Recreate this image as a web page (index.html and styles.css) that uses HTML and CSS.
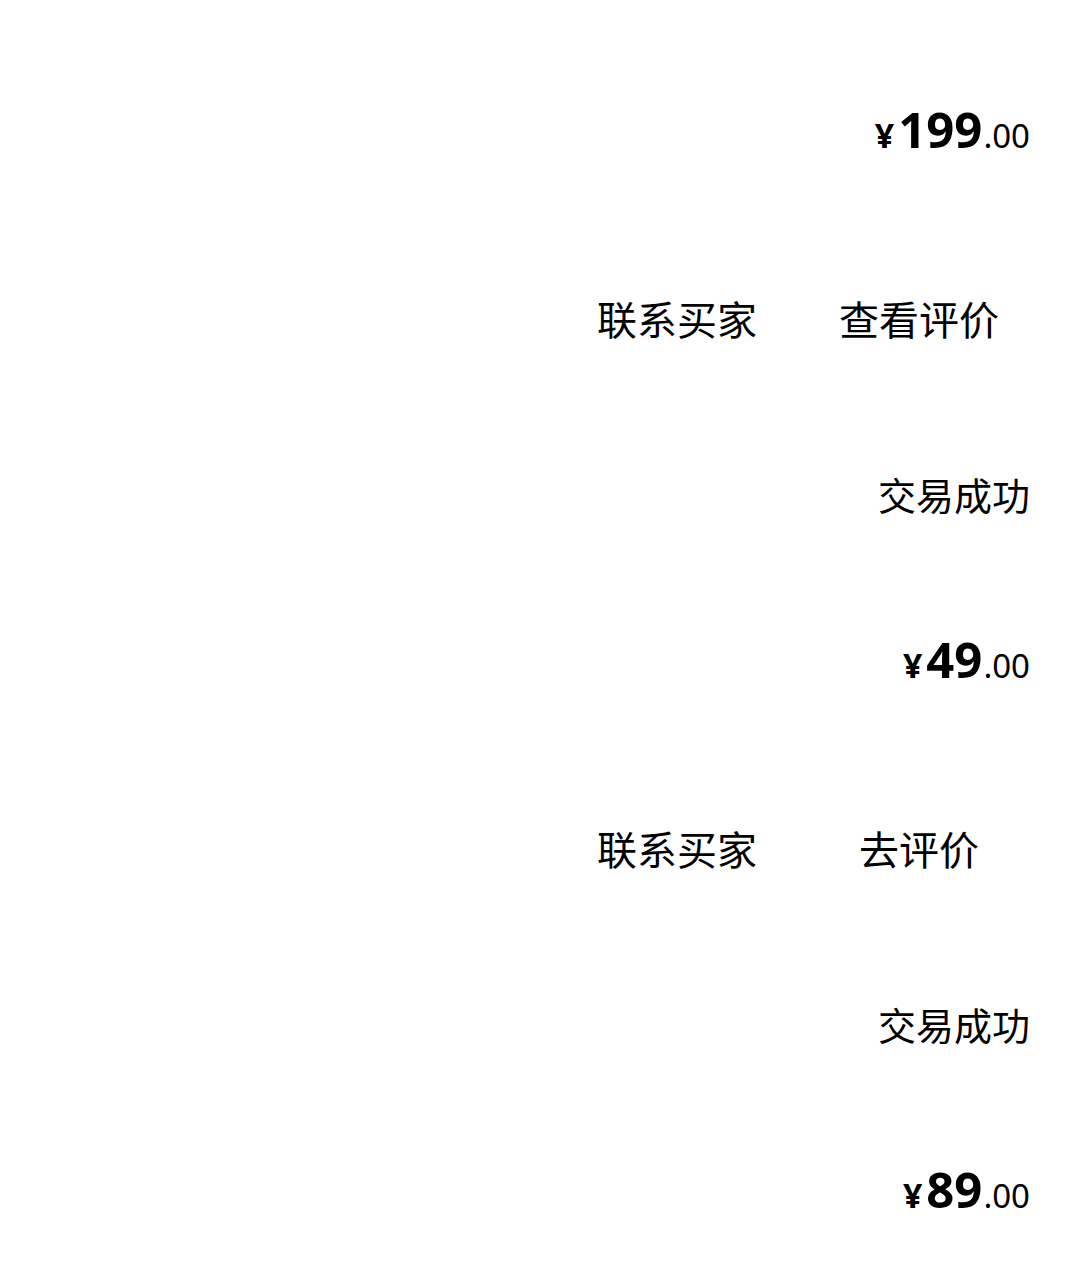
FILE: index.html
```html
<!DOCTYPE html>
<html lang="zh-CN">
<head>
<meta charset="utf-8">
<title>订单</title>
<link rel="stylesheet" href="styles.css">
</head>
<body>
<div class="orders">
  <div class="order">
    <div class="price"><span class="cur">¥</span><span class="int">199</span><span class="dec">.00</span></div>
    <div class="actions"><span class="btn">联系买家</span><span class="btn">查看评价</span></div>
  </div>
  <div class="order">
    <div class="status">交易成功</div>
    <div class="price"><span class="cur">¥</span><span class="int">49</span><span class="dec">.00</span></div>
    <div class="actions"><span class="btn">联系买家</span><span class="btn">去评价</span></div>
  </div>
  <div class="order">
    <div class="status">交易成功</div>
    <div class="price"><span class="cur">¥</span><span class="int">89</span><span class="dec">.00</span></div>
  </div>
</div>
</body>
</html>
```
FILE: styles.css
```css
html, body {
  margin: 0;
  padding: 0;
  background: #fff;
}
body {
  font-family: "Noto Sans CJK SC", "Noto Sans", sans-serif;
  color: #000;
  overflow: hidden;
}
.orders {
  padding-top: 93px;
  padding-right: 45px;
}
.order {
  display: flex;
  flex-direction: column;
  align-items: flex-end;
}
.status {
  height: 80px;
  display: flex;
  align-items: center;
  font-size: 38px;
  margin-bottom: 90px;
}
.price {
  height: 80px;
  display: flex;
  align-items: baseline;
  justify-content: flex-end;
  line-height: 80px;
  margin-top: -4px;
  margin-bottom: 109px;
  font-family: "Noto Sans", "Open Sans", sans-serif;
}
.cur {
  font-size: 34px;
  font-weight: 700;
  margin-right: 4px;
}
.int {
  font-size: 49px;
  font-weight: 700;
}
.dec {
  font-size: 33px;
  margin-left: 1px;
}
.actions {
  height: 80px;
  display: flex;
  gap: 20px;
  margin-bottom: 95px;
}
.btn {
  width: 222px;
  display: flex;
  align-items: center;
  justify-content: center;
  font-size: 40px;
}
```
